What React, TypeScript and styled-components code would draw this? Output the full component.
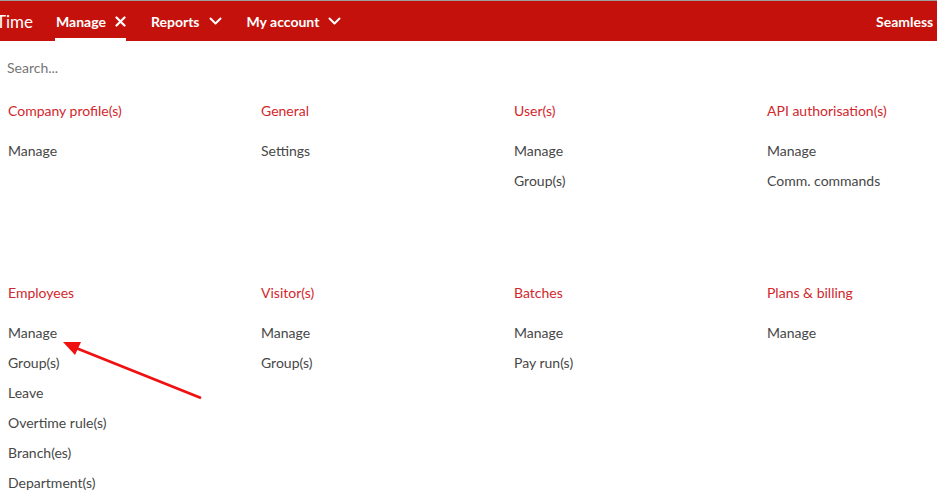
import React from "react";
import styled, { createGlobalStyle } from "styled-components";

const Global = createGlobalStyle`
  html, body { margin: 0; padding: 0; background: #fff; overflow: hidden; }
  body { font-family: Lato, "Open Sans", Arial, sans-serif; }
  * { box-sizing: border-box; }
`;

const Page = styled.div`
  position: relative;
  width: 937px;
  height: 499px;
  overflow: hidden;
`;

const Header = styled.header`
  display: flex;
  align-items: stretch;
  height: 41px;
  border-top: 1px solid #9e9e9e;
  background: #c4110b;
  color: #fff;
`;

const Logo = styled.div`
  display: flex;
  align-items: center;
  font-size: 17px;
  margin-left: -4px;
  margin-right: 22px;
  padding-top: 1px;
`;

const Nav = styled.nav`
  display: flex;
  gap: 24px;
`;

const NavItem = styled.div<{ $active?: boolean }>`
  display: flex;
  align-items: center;
  gap: 9px;
  padding: 3px 0 0 1px;
  font-size: 14px;
  font-weight: 700;
  border-bottom: 3px solid ${(p) => (p.$active ? "#fff" : "transparent")};
`;

const Account = styled.div`
  margin-left: auto;
  width: 61px;
  overflow: hidden;
  white-space: nowrap;
  display: flex;
  align-items: center;
  font-size: 14px;
  font-weight: 700;
`;

const SearchWrap = styled.div`
  height: 55px;
  padding: 14px 0 0 7px;
`;

const SearchInput = styled.input`
  border: none;
  outline: none;
  height: 24px;
  width: 300px;
  padding: 0;
  font-family: Lato, Arial, sans-serif;
  font-size: 14px;
  color: #444;
  background: transparent;
  &::placeholder { color: #767676; }
`;

const Grid = styled.div`
  display: grid;
  grid-template-columns: repeat(4, 253px);
  padding-left: 8px;
`;

const Section = styled.section`
  min-height: 182px;
  display: flex;
  flex-direction: column;
`;

const Title = styled.div`
  height: 30px;
  line-height: 30px;
  font-size: 14px;
  color: #d2272c;
  margin-bottom: 10px;
`;

const Item = styled.div`
  height: 30px;
  line-height: 30px;
  font-size: 14px;
  color: #474747;
`;

const Overlay = styled.svg`
  position: absolute;
  left: 0;
  top: 0;
  pointer-events: none;
`;

const XIcon = () => (
  <svg width="11" height="11" viewBox="0 0 11 11">
    <path d="M1.5 1.5 L9.5 9.5 M9.5 1.5 L1.5 9.5" stroke="#fff" strokeWidth="2.2" strokeLinecap="round" />
  </svg>
);

const Chevron = () => (
  <svg width="13" height="8" viewBox="0 0 13 8">
    <path d="M1.5 1.5 L6.5 6.5 L11.5 1.5" stroke="#fff" strokeWidth="2" fill="none" strokeLinecap="round" strokeLinejoin="round" />
  </svg>
);

const sections: { title: string; items: string[] }[] = [
  { title: "Company profile(s)", items: ["Manage"] },
  { title: "General", items: ["Settings"] },
  { title: "User(s)", items: ["Manage", "Group(s)"] },
  { title: "API authorisation(s)", items: ["Manage", "Comm. commands"] },
  {
    title: "Employees",
    items: ["Manage", "Group(s)", "Leave", "Overtime rule(s)", "Branch(es)", "Department(s)"],
  },
  { title: "Visitor(s)", items: ["Manage", "Group(s)"] },
  { title: "Batches", items: ["Manage", "Pay run(s)"] },
  { title: "Plans & billing", items: ["Manage"] },
];

export default function App() {
  return (
    <Page>
      <Global />
      <Header>
        <Logo>Time</Logo>
        <Nav>
          <NavItem $active>
            Manage <XIcon />
          </NavItem>
          <NavItem>
            Reports <Chevron />
          </NavItem>
          <NavItem>
            My account <Chevron />
          </NavItem>
        </Nav>
        <Account>Seamless Co</Account>
      </Header>
      <SearchWrap>
        <SearchInput placeholder="Search..." />
      </SearchWrap>
      <Grid>
        {sections.map((s) => (
          <Section key={s.title}>
            <Title>{s.title}</Title>
            {s.items.map((i) => (
              <Item key={i}>{i}</Item>
            ))}
          </Section>
        ))}
      </Grid>
      <Overlay width="937" height="499" viewBox="0 0 937 499">
        <line x1="201" y1="398" x2="76" y2="348" stroke="#f01010" strokeWidth="2.6" />
        <polygon points="63,342 81,342 75,355" fill="#f01010" />
      </Overlay>
    </Page>
  );
}
